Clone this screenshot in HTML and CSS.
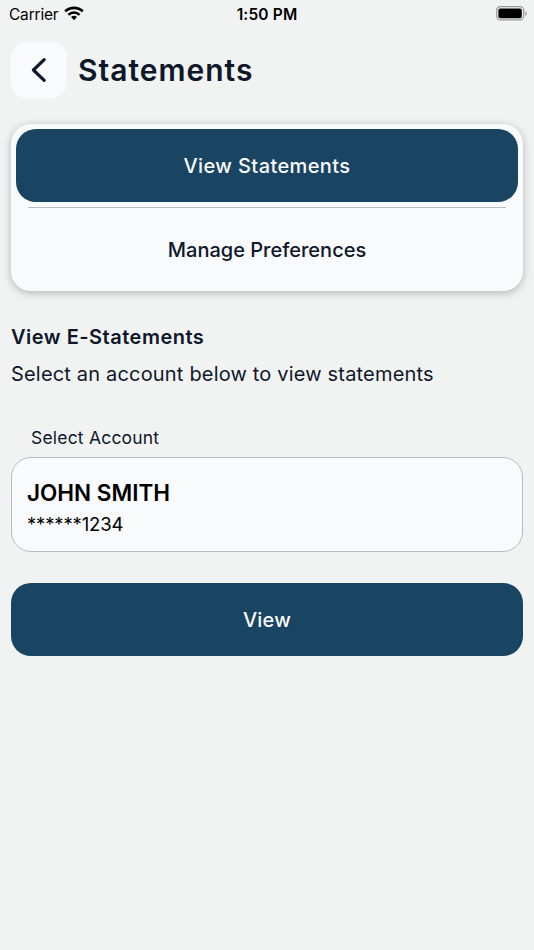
FILE: index.html
```html
<!DOCTYPE html>
<html lang="en">
<head>
    <meta charset="UTF-8">
    <meta name="viewport" content="width=device-width, initial-scale=1.0">
    <title>Statements</title>
    <link rel="stylesheet" href="styles.css">
</head>
<body>
    <div class="status-bar">
        <div class="status-left">
            <span class="carrier">Carrier</span>
            <svg class="wifi" width="20" height="15" viewBox="0 0 20 15">
                <path d="M1.2 5.3a12.8 12.8 0 0 1 17.6 0" fill="none" stroke="#000" stroke-width="2.7"/>
                <path d="M4.4 8.8a8 8 0 0 1 11.2 0" fill="none" stroke="#000" stroke-width="2.5"/>
                <path d="M10 14.2l-3-3.1a4.4 4.4 0 0 1 6 0z"/>
            </svg>
        </div>
        <span class="time">1:50 PM</span>
        <svg class="battery" width="32" height="15" viewBox="0 0 32 15">
            <rect x="0.7" y="0.7" width="27" height="13.2" rx="3.6" fill="none" stroke="#999" stroke-width="1.2"/>
            <rect x="2.4" y="2.4" width="23.4" height="9.8" rx="1.8"/>
            <path d="M29.3 5v4.8c1.9-.7 1.9-4.1 0-4.8z" fill="#999"/>
        </svg>
    </div>

    <header>
        <button class="back" aria-label="Back">
            <svg width="16" height="26" viewBox="0 0 16 26">
                <path d="M13.2 2.6L2.4 13l10.8 10.4" fill="none" stroke="#0f172a" stroke-width="3.2" stroke-linecap="round" stroke-linejoin="round"/>
            </svg>
        </button>
        <h1>Statements</h1>
    </header>

    <main>
        <div class="tabs">
            <button class="tab active">View Statements</button>
            <div class="divider"></div>
            <button class="tab">Manage Preferences</button>
        </div>

        <h2>View E-Statements</h2>
        <p class="hint">Select an account below to view statements</p>

        <div class="label">Select Account</div>
        <div class="account">
            <div class="account-name">JOHN SMITH</div>
            <div class="account-number">******1234</div>
        </div>

        <button class="btn">View</button>
    </main>
</body>
</html>
```

FILE: styles.css
```css
:root {
    --primary-color: #194462;
    --background-color: #f0f3f2;
    --card-color: #f9fafc;
    --text-color: #0f172a;
}

* {
    box-sizing: border-box;
}

body {
    font-family: Inter, 'Open Sans', sans-serif;
    background-color: var(--background-color);
    color: var(--text-color);
    margin: 0;
    min-height: 100vh;
}

button {
    font-family: inherit;
    border: none;
    padding: 0;
    cursor: pointer;
}

.status-bar {
    display: grid;
    grid-template-columns: 1fr auto 1fr;
    align-items: center;
    height: 28px;
    padding: 0 6px 0 9px;
    color: #000;
}

.status-left {
    display: flex;
    align-items: center;
    gap: 6px;
}

.carrier {
    font-size: 15.5px;
    letter-spacing: -0.2px;
}

.wifi {
    margin-top: -2px;
}

.time {
    font-weight: 600;
    font-size: 15.5px;
    letter-spacing: 0.15px;
    margin-right: 3px;
}

.battery {
    justify-self: end;
    margin-top: -1px;
}

header {
    display: flex;
    align-items: center;
    gap: 11px;
    padding: 14px 11px 0;
}

.back {
    display: flex;
    align-items: center;
    justify-content: center;
    width: 56px;
    height: 56px;
    border-radius: 15px;
    background-color: var(--card-color);
}

h1 {
    margin: 0;
    font-size: 30px;
    font-weight: 600;
    line-height: 40px;
    letter-spacing: 1px;
}

main {
    padding: 26px 11px 0;
}

.tabs {
    height: 167px;
    padding: 5px;
    border-radius: 20px;
    background-color: var(--card-color);
    box-shadow: 0 2px 8px rgba(0, 0, 0, 0.26);
}

.tab {
    display: block;
    width: 100%;
    height: 73px;
    border-radius: 20px;
    background-color: transparent;
    color: var(--text-color);
    font-size: 20px;
    font-weight: 500;
}

.tab.active {
    background-color: var(--primary-color);
    color: var(--card-color);
    letter-spacing: 0.4px;
}

.divider {
    height: 1px;
    margin: 5px 12px;
    background-color: #b9bbbe;
}

h2 {
    margin: 32px 0 0;
    font-size: 20px;
    font-weight: 600;
    line-height: 28px;
    letter-spacing: 0.5px;
}

.hint {
    margin: 9px 0 0;
    font-size: 20px;
    line-height: 28px;
    letter-spacing: 0.18px;
}

.label {
    margin: 38px 0 0 20px;
    font-size: 17.5px;
    line-height: 24px;
    letter-spacing: 0.2px;
}

.account {
    height: 95px;
    margin-top: 7px;
    padding: 19px 15px;
    border: 1px solid #b9bbbe;
    border-radius: 20px;
    background-color: var(--card-color);
    color: #000;
}

.account-name {
    font-size: 22.5px;
    font-weight: 600;
    line-height: 32px;
}

.account-number {
    font-size: 18.5px;
    line-height: 30px;
    letter-spacing: -0.15px;
}

.btn {
    display: block;
    width: 100%;
    height: 73px;
    margin-top: 31px;
    border-radius: 20px;
    background-color: var(--primary-color);
    color: var(--card-color);
    font-size: 20px;
    font-weight: 500;
    letter-spacing: 0.2px;
}
```
